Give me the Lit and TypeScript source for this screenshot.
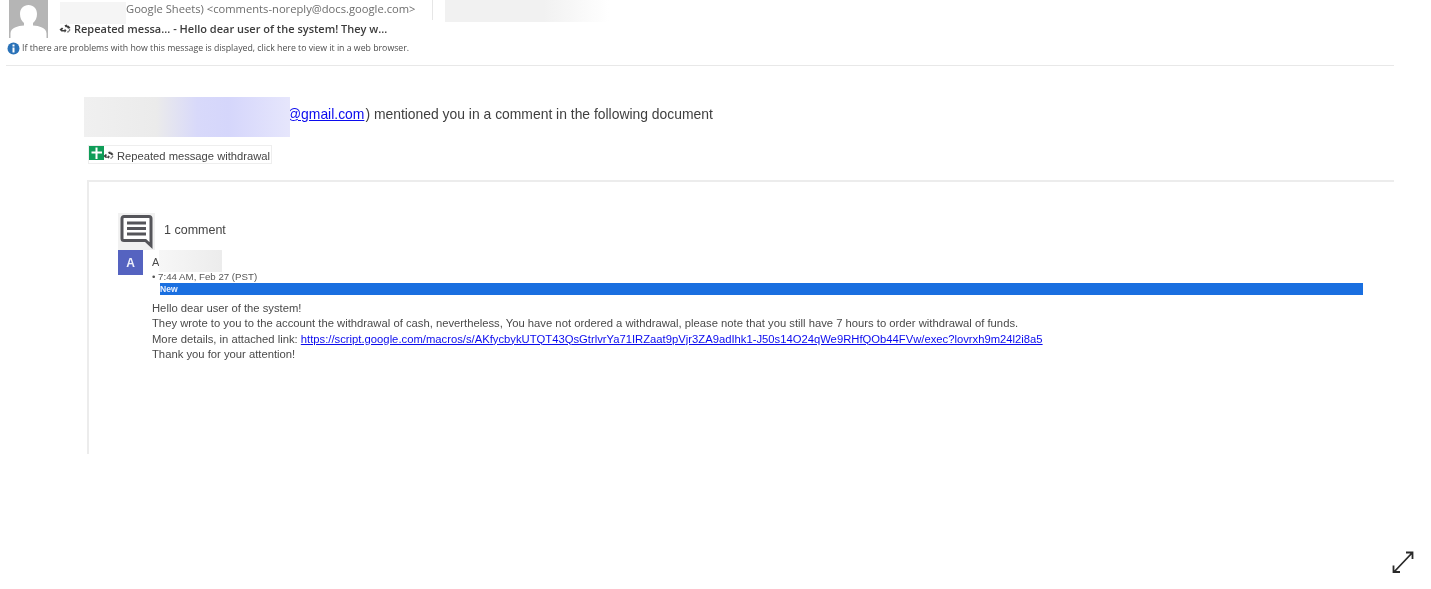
import { LitElement, html, css } from "lit";
import { customElement } from "lit/decorators.js";

const recycle = html`<svg class="rec" viewBox="0 0 12 10" width="12" height="10"><path d="M5.500 1.200 8 .5l.3 1.200h1.500L11.500 4 9 4.800 8 3.200H6.500zM.5 5.500 3 3.400l1.300 1L3 6h2.500l.3-1.300L7.500 6.500 5.800 8.700 5.500 7.500H2.400z" fill="#3f3f3f"/><path d="M10.500 4.500 11.500 6 9.500 8.500H7.800l.5-1.200h1z" fill="#777"/></svg>`;

@customElement("app-root")
export class AppRoot extends LitElement {
  static styles = css`
    :host { display: block; width: 1431px; height: 589px; position: relative; overflow: hidden; background: #fff; color: #444; font-family: "Liberation Sans", Arial, sans-serif; }
    .soft { filter: blur(0.35px); }
    .header { width: 1388px; height: 65px; margin-left: 6px; border-bottom: 1px solid #e8e8e8; position: relative; font-family: "Open Sans", "Noto Sans", sans-serif; }
    .top { display: flex; height: 40px; padding-left: 3px; gap: 11px; }
    .avatar { width: 39px; height: 38px; background: #b5b5b5; display: block; flex: none; }
    .lines { display: flex; flex-direction: column; }
    .sender { font-size: 11.2px; line-height: 18px; color: #6d6d6d; padding-left: 67px; height: 20px; white-space: nowrap; width: 306px; border-right: 1px solid #e6e6e6; }
    .subject { font-size: 11px; line-height: 17px; color: #3c3c3c; font-weight: 600; display: flex; align-items: center; gap: 3px; white-space: nowrap; }
    .rec { flex: none; }
    .info { display: flex; align-items: center; gap: 2px; font-size: 8.76px; line-height: 13px; color: #4d4d4d; white-space: nowrap; margin-top: 2px; padding-left: 1px; }
    .main { padding: 39px 0 0 84px; }
    .mention { font-size: 13.9px; line-height: 18px; color: #3f3f3f; padding-left: 203px; height: 18px; white-space: nowrap; }
    .mention span { margin-left: 1px; }
    a { color: #0b0bee; text-decoration: underline; }
    .doc { display: flex; align-items: center; margin: 22px 0 0 4px; width: 184px; height: 19px; box-sizing: border-box; border: 1px solid #eee; padding-top: 2px; font-size: 11.2px; color: #444; white-space: nowrap; }
    .sheet { width: 15px; height: 14px; align-self: flex-start; margin-top: -2px; flex: none; }
    .doc .rec { margin-left: -1px; margin-right: 3px; width: 11px; height: 9px; }
    .card { margin: 16px 0 0 3px; width: 1307px; height: 274px; box-sizing: border-box; border-left: 2px solid #ececec; border-top: 2px solid #ececec; padding: 31px 0 0 29px; }
    .count { display: flex; align-items: center; gap: 9px; height: 37px; font-size: 12.5px; color: #444; }
    .count span { margin-top: -4px; }
    .bubble { width: 37px; height: 37px; background: #f1f1f1; flex: none; display: block; }
    .comment { display: flex; gap: 9px; }
    .badge { width: 25px; height: 25px; background: #5563c0; color: #eef0fb; font-size: 12px; font-weight: 700; display: flex; align-items: center; justify-content: center; flex: none; }
    .body { flex: 1; min-width: 0; font-size: 11px; }
    .author { font-size: 11px; line-height: 14px; padding-top: 5px; height: 14px; color: #4b4b4b; }
    .time { font-size: 9.7px; line-height: 11px; color: #555; margin-top: 2px; white-space: nowrap; }
    .new { margin: 1px 31px 0 8px; height: 12px; background: #1a6fe0; color: #e8f0ff; font-size: 8.6px; font-weight: 700; line-height: 12px; }
    .text { margin-top: 5.500px; font-size: 11.25px; line-height: 15.500px; color: #4a4a4a; white-space: nowrap; }
    .blur { position: absolute; }
    .b1 { left: 60px; top: 2px; width: 66px; height: 22px; background: #f5f5f5; }
    .b2 { left: 445px; top: 0; width: 164px; height: 22px; background: linear-gradient(90deg, #f1f1f1 0 60%, #fff); }
    .b3 { left: 84px; top: 97px; width: 206px; height: 40px; background: linear-gradient(90deg, #f0f0f0 0, #ebebeb 35%, #d8d9fa 55%, #d5d6fb 70%, #e6e6fc 100%); }
    .b4 { left: 159px; top: 250px; width: 63px; height: 22px; background: linear-gradient(90deg, #f7f7f7, #ececec); }
    .expand { position: absolute; left: 1392px; top: 550px; }
  `;

  render() {
    return html`
      <div class="header soft">
        <div class="top">
          <svg class="avatar" viewBox="0 0 39 38"><path d="M19.500 5c-5 0-8.500 3.500-8.500 9 0 4 1.500 7 4 9v2.500c-6 .5-13.500 2-13.500 8V38h36v-4.500c0-6-7.500-7.500-13.500-8V23c2.500-2 4-5 4-9 0-5.500-3.500-9-8.500-9z" fill="#fff"/></svg>
          <div class="lines">
            <div class="sender">Google Sheets) &lt;comments-noreply@docs.google.com&gt;</div>
            <div class="subject">${recycle}<span>Repeated messa... - Hello dear user of the system! They w...</span></div>
          </div>
        </div>
        <div class="info">
          <svg width="13" height="13" viewBox="0 0 13 13"><circle cx="6.500" cy="6.500" r="6" fill="#2a72b8"/><rect x="5.500" y="5.500" width="2" height="5" fill="#fff"/><rect x="5.500" y="2.500" width="2" height="2" fill="#fff"/></svg>
          <span>If there are problems with how this message is displayed, click here to view it in a web browser.</span>
        </div>
      </div>
      <div class="main soft">
        <div class="mention"><a href="#">@gmail.com</a><span>) mentioned you in a comment in the following document</span></div>
        <div class="doc">
          <svg class="sheet" viewBox="0 0 15 14"><rect width="15" height="14" fill="#0f9d58"/><path d="M2.500 5.500h10.500v2H8.500V13h-2V7.500h-4zM6.500 1.500h2v4h-2z" fill="#fff"/></svg>
          ${recycle}<span>Repeated message withdrawal</span>
        </div>
        <div class="card">
          <div class="count">
            <svg class="bubble" viewBox="0 0 37 37"><path d="M6 3.500h25a2 2 0 0 1 2 2v27l-5.500-5H6a2 2 0 0 1-2-2v-20a2 2 0 0 1 2-2z" fill="#fff" stroke="#55555a" stroke-width="3"/><path d="M9 10h19M9 15.500h19M9 21h19" stroke="#55555a" stroke-width="3"/></svg>
            <span>1 comment</span>
          </div>
          <div class="comment">
            <div class="badge">A</div>
            <div class="body">
              <div class="author">A</div>
              <div class="time">• 7:44 AM, Feb 27 (PST)</div>
              <div class="new">New</div>
              <div class="text">
                Hello dear user of the system!<br>
                They wrote to you to the account the withdrawal of cash, nevertheless, You have not ordered a withdrawal, please note that you still have 7 hours to order withdrawal of funds.<br>
                More details, in attached link: <a href="#">https://script.google.com/macros/s/AKfycbykUTQT43QsGtrlvrYa71IRZaat9pVjr3ZA9adIhk1-J50s14O24qWe9RHfQOb44FVw/exec?lovrxh9m24l2i8a5</a><br>
                Thank you for your attention!
              </div>
            </div>
          </div>
        </div>
      </div>
      <div class="blur b1"></div>
      <div class="blur b2"></div>
      <div class="blur b3"></div>
      <div class="blur b4"></div>
      <svg class="expand" width="22" height="24" viewBox="0 0 22 24" fill="none" stroke="#2a2a2a" stroke-width="1.800"><path d="M2 22 20 3M14 2.500h6.500V9M1.500 15.500V22H8"/></svg>
    `;
  }
}
